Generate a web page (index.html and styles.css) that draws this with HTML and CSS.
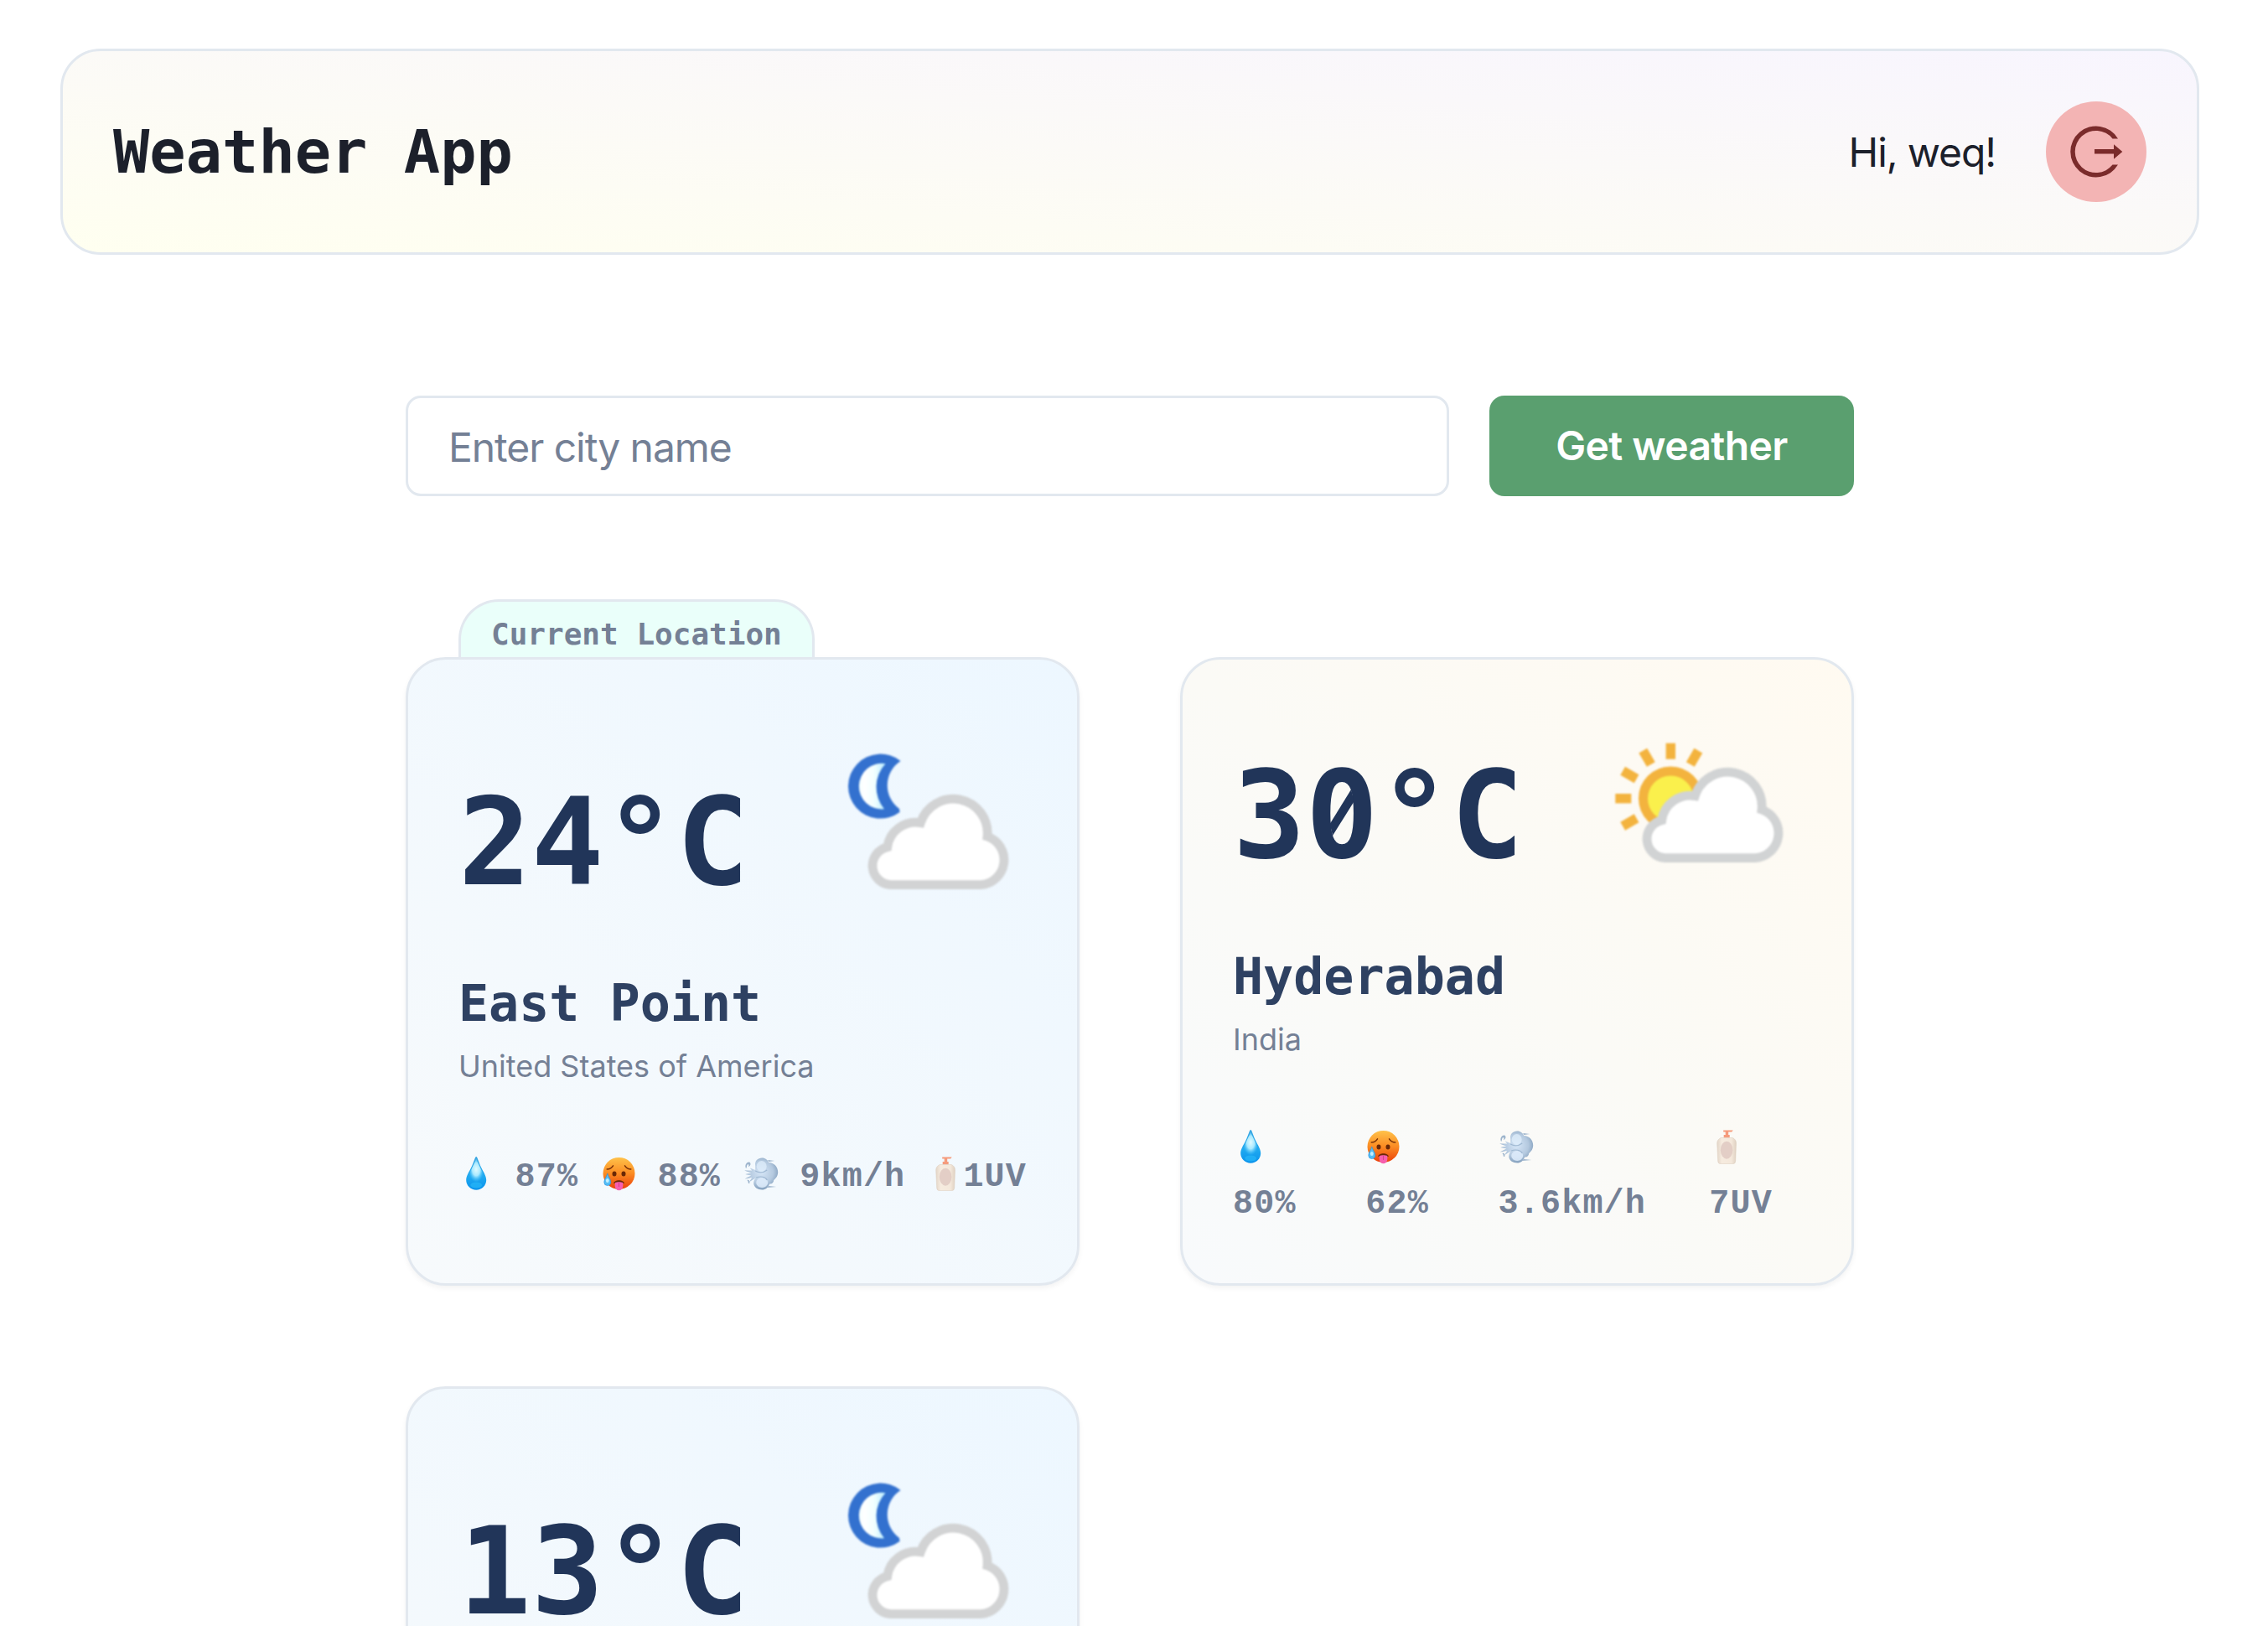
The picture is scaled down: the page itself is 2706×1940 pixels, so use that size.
FILE: index.html
```html
<!DOCTYPE html>
<html lang="en">
<head>
<meta charset="utf-8">
<title>Weather App</title>
<link rel="stylesheet" href="styles.css">
</head>
<body>
<svg class="sprites" width="0" height="0" aria-hidden="true">
  <defs>
    <linearGradient id="moonFill" x1="0" x2="1"><stop offset="0" stop-color="#f4ffff"/><stop offset=".2" stop-color="#ffffff"/><stop offset=".6" stop-color="#f0ffff"/><stop offset="1" stop-color="#b8ecff"/></linearGradient>
    <linearGradient id="dropFill" x1="0" y1="0" x2="0" y2="1"><stop offset="0" stop-color="#3aa5e0"/><stop offset=".6" stop-color="#1fa9f0"/><stop offset="1" stop-color="#0b93ec"/></linearGradient>
    <radialGradient id="dropGlow" cx=".5" cy=".42" r=".5"><stop offset="0" stop-color="#e2fbff"/><stop offset=".5" stop-color="#a9e9ff"/><stop offset="1" stop-color="#3fc0fb" stop-opacity="0"/></radialGradient>
    <linearGradient id="faceFill" x1="0" y1="0" x2="0" y2="1"><stop offset="0" stop-color="#ffc24a"/><stop offset=".5" stop-color="#fb8c23"/><stop offset="1" stop-color="#ea3f0a"/></linearGradient>
    <radialGradient id="windFill" cx=".5" cy=".45" r=".6"><stop offset="0" stop-color="#d6e6f7"/><stop offset=".6" stop-color="#b4c9df"/><stop offset="1" stop-color="#7694b4"/></radialGradient>
    <linearGradient id="bottleFill" x1="0" x2="1"><stop offset="0" stop-color="#e3d6c8"/><stop offset=".25" stop-color="#f6ebdf"/><stop offset=".75" stop-color="#f4e8db"/><stop offset="1" stop-color="#dfd1c2"/></linearGradient>
    <path id="cloud" d="M78 169.7H185A29.7 29.7 0 0 0 193 112A40.9 40.9 0 0 0 113.3 95.7A34 34 0 0 0 73.7 124.7A22.8 22.8 0 0 0 78 169.7Z"/>
  </defs>
  <symbol id="cloudy-night" viewBox="0 0 240 192">
    <path fill="#3371cf" d="M89.5 22A38.500 38.500 0 1 0 88.5 83L88 79A34.600 34.600 0 0 1 89.5 22Z"/>
    <path fill="url(#moonFill)" d="M71.5 25.200A27.300 27.300 0 1 0 70 79.300A41 41 0 0 1 71.5 25.200Z"/>
    <use href="#cloud" fill="#fff" stroke="#d2d3d4" stroke-width="10.800"/>
  </symbol>
  <symbol id="cloudy-day" viewBox="0 0 240 192">
    <circle cx="84.300" cy="98.700" r="32.800" fill="#faf04c" stroke="#f3b33e" stroke-width="11"/>
    <g fill="#f3b33e">
      <rect id="ray" x="78.600" y="32.700" width="11.400" height="19"/>
      <use href="#ray" transform="rotate(30 84.300 98.700)"/>
      <use href="#ray" transform="rotate(-30 84.300 98.700)"/>
      <use href="#ray" transform="rotate(-60 84.300 98.700)"/>
      <use href="#ray" transform="rotate(-90 84.300 98.700)"/>
      <use href="#ray" transform="rotate(-120 84.300 98.700)"/>
    </g>
    <use href="#cloud" fill="#fff" stroke="#d1d3d4" stroke-width="10.800"/>
  </symbol>
  <symbol id="humidity" viewBox="0 0 42 42">
    <path fill="url(#dropFill)" d="M21 1C22.500 1 23.500 7 27 14C30 20 33 24 33 29A12 11.700 0 0 1 9 29C9 24 12 20 15 14C18.500 7 19.500 1 21 1Z"/>
    <path fill="url(#dropGlow)" d="M21 3C22 8 30.500 21 30.500 27A9.500 7 0 0 1 11.500 27C11.500 21 20 8 21 3Z"/>
    <ellipse cx="21" cy="35" rx="7" ry="3.500" fill="#27b6f8" opacity=".7"/>
  </symbol>
  <symbol id="feels-like" viewBox="0 0 42 42">
    <circle cx="21.300" cy="20.900" r="19" fill="url(#faceFill)"/>
    <g fill="none" stroke="#7b3208" stroke-width="1.500" stroke-linecap="round">
      <path d="M7 16C11 15.700 13 14 14.300 11.800M28.300 11.800C29.600 14 31.600 15.700 35.600 16"/>
    </g>
    <ellipse cx="15.800" cy="21.500" rx="2.500" ry="2.900" fill="#6a2806"/>
    <ellipse cx="26.800" cy="21.500" rx="2.500" ry="2.900" fill="#6a2806"/>
    <path fill="#6a2806" d="M15 33C15.500 28 27.100 28 27.600 33Z"/>
    <path fill="#f65fae" d="M16.500 32C19 31 23.600 31 26.100 32V36A4.800 5.200 0 0 1 16.500 36Z"/>
    <path stroke="#d63f8d" stroke-width="1" d="M21.300 32V37"/>
    <path fill="#55bdf5" stroke="#1f8fe0" stroke-width=".6" d="M7.600 21C8.500 25 11.600 28 11.600 31.500A4 4 0 0 1 3.600 31.500C3.600 28 6.700 25 7.600 21Z"/>
    <ellipse cx="7.600" cy="29.500" rx="1.900" ry="2.600" fill="#c4efff"/>
  </symbol>
  <symbol id="wind" viewBox="0 0 42 42">
    <path fill="url(#windFill)" d="M14 12C13 6 17 2.500 22 2.500C26 2.500 29 5 30 8C36 8 41 13 41 19.500C41 24 38.500 27 36 29C36 32 33.500 34 31 33.500C29.500 38 26 40.500 22 40.500C17 40.500 12 37.500 12 32.500C12 29.500 13.500 27.500 14.500 26.500L7 31L10 26L1.500 27.500L9 23.500L2 22L9 20.500L1 17.500L10 17.500L7.500 14.500L14 17Z"/>
    <path fill="#9db4cc" d="M3 15C1 12 3 7 7 7.500C9.500 9 8 13 5.500 13C7 11 6 9.500 4.500 10.500C3.500 12 4 13.500 3 15ZM4 29C6 28 8 30 7 33C4.500 33 6.500 30.500 4 29ZM29 5L37 6L30 7ZM30 36L39 37L28 38Z"/>
    <ellipse cx="21.500" cy="12.500" rx="6" ry="6.500" fill="#dfedfb" opacity=".75"/>
    <ellipse cx="22" cy="32" rx="7" ry="6" fill="#deecfb" opacity=".85"/>
    <path fill="none" stroke="#8fabc8" stroke-width="1.200" opacity=".7" d="M14 18C19 21 24 20 28 17M15 26C20 24 26 25 28 29"/>
  </symbol>
  <symbol id="uv" viewBox="0 0 42 42">
    <path fill="#f59b7c" d="M17 1.500H28.500L27 3.500H23V7H24.500V10.500H17.500V7H19.500V3.500H17Z"/>
    <path fill="url(#bottleFill)" stroke="#dccdbc" stroke-width=".5" d="M14 10.500H28C31 12 32.300 14 32.300 17L31.500 38C31.300 41 30 41.500 28 41.500H14C12 41.500 10.700 41 10.500 38L9.500 17C9.500 14 11 12 14 10.500Z"/>
    <ellipse cx="20.900" cy="25.200" rx="7.300" ry="10.500" fill="#e3cec6"/>
  </symbol>
</svg>

<div class="page">
  <header class="header">
    <h1 class="title">Weather App</h1>
    <div class="user">
      <span class="greeting">Hi, weq!</span>
      <button class="logout" aria-label="Log out">
        <svg viewBox="0 0 120 120" width="120" height="120" fill="#7a2b2b">
          <path d="M86 44.400A30.500 30.500 0 1 0 86 75.600H79.500A25.100 25.100 0 1 1 79.500 44.400Z"/>
          <path d="M58 57.100H81V51.200L91.300 59.900L81 68.700V62.500H58Z"/>
        </svg>
      </button>
    </div>
  </header>

  <main class="content">
    <form class="search">
      <input class="city-input" type="text" placeholder="Enter city name">
      <button class="submit" type="button">Get weather</button>
    </form>

    <section class="cards">
      <article class="card night">
        <span class="tab">Current Location</span>
        <div class="top"><span class="temp">24°C</span><svg class="sky"><use href="#cloudy-night"/></svg></div>
        <h2 class="city">East Point</h2>
        <p class="country">United States of America</p>
        <ul class="stats">
          <li><svg class="emoji"><use href="#humidity"/></svg><span class="value">87%</span></li>
          <li><svg class="emoji"><use href="#feels-like"/></svg><span class="value">88%</span></li>
          <li><svg class="emoji"><use href="#wind"/></svg><span class="value">9km/h</span></li>
          <li class="tight"><svg class="emoji"><use href="#uv"/></svg><span class="value">1UV</span></li>
        </ul>
      </article>

      <article class="card day">
        <div class="top"><span class="temp">3<span class="zero">0</span>°C</span><svg class="sky"><use href="#cloudy-day"/></svg></div>
        <h2 class="city">Hyderabad</h2>
        <p class="country">India</p>
        <ul class="stats stacked">
          <li><svg class="emoji"><use href="#humidity"/></svg><span class="value">80%</span></li>
          <li><svg class="emoji"><use href="#feels-like"/></svg><span class="value">62%</span></li>
          <li><svg class="emoji"><use href="#wind"/></svg><span class="value">3.6km/h</span></li>
          <li><svg class="emoji"><use href="#uv"/></svg><span class="value">7UV</span></li>
        </ul>
      </article>

      <article class="card night">
        <div class="top"><span class="temp">13°C</span><svg class="sky"><use href="#cloudy-night"/></svg></div>
      </article>
    </section>
  </main>
</div>
</body>
</html>
```
FILE: styles.css
```css
* { box-sizing: border-box; margin: 0; padding: 0; }

html, body { height: 1940px; overflow: hidden; }

body {
  background: #fff;
  color: #1c202b;
  font-family: Inter, "Liberation Sans", sans-serif;
}

.sprites { display: block; width: 0; height: 0; }

.page { width: 2696px; padding: 58px 72px 0; }

.header {
  display: flex;
  align-items: center;
  justify-content: space-between;
  height: 246px;
  padding: 60px;
  border: 3px solid #e2e8ef;
  border-radius: 48px;
  background: linear-gradient(to top right, #fffff0, #f8f5fe);
}

.title, .temp, .city, .tab {
  font-family: "DejaVu Sans Mono", "Liberation Mono", monospace;
  font-weight: 700;
}

.title { font-size: 72px; line-height: 90px; }

.user { display: flex; align-items: center; gap: 60px; }

.greeting { padding-top: 2px; font-size: 48px; line-height: 72px; letter-spacing: -1.1px; }

.logout {
  width: 120px;
  height: 120px;
  border: 0;
  border-radius: 50%;
  background: #f3b4b4;
}

.logout svg { display: block; }

.content { width: 1728px; margin: 168px auto 0; }

.search { display: flex; gap: 48px; height: 120px; }

.city-input {
  flex: 1;
  min-width: 0;
  padding: 3px 48px 0;
  border: 3px solid #e2e8ef;
  border-radius: 18px;
  background: #fff;
  color: #1c202b;
  font: 400 48px/72px Inter, "Liberation Sans", sans-serif;
  letter-spacing: -1.05px;
}

.city-input::placeholder { color: #748095; opacity: 1; }

.submit {
  width: 435px;
  border: 0;
  border-radius: 18px;
  background: #5a9f6f;
  color: #fff;
  font: 600 48px/58px Inter, "Liberation Sans", sans-serif;
  letter-spacing: -0.6px;
}

.cards {
  display: grid;
  grid-template-columns: 804px 804px;
  grid-auto-rows: 750px;
  gap: 120px;
  margin-top: 192px;
}

.card {
  position: relative;
  display: flex;
  flex-direction: column;
  justify-content: center;
  padding: 60px;
  border: 3px solid #e2e8ef;
  border-radius: 48px;
  box-shadow: 0 3px 6px rgba(0, 0, 0, .05);
}

.card:last-child { justify-content: flex-start; padding-top: 99px; }

.night { background: linear-gradient(to top right, #f7fafc, #edf7ff); }
.day { background: linear-gradient(to top right, #f8fafc, #fbfaf6 50%, #fffaf1); }

/* Label sitting on the card's top edge */
.tab {
  position: absolute;
  left: 60px;
  bottom: 100%;
  height: 69px;
  margin-bottom: 3px;
  padding: 12px 36px 0;
  border: 3px solid #e2e8ef;
  border-bottom: 0;
  border-radius: 48px 48px 0 0;
  background: #eafffa;
  color: #748095;
  font-size: 36px;
  line-height: 54px;
  white-space: nowrap;
}

.top { display: flex; justify-content: space-between; height: 238px; }

.temp { color: #213559; font-size: 144px; line-height: 238px; }

/* Slashed zero: hides the dot in the counter and draws a diagonal bar */
.zero { position: relative; display: inline-block; }
.zero::before, .zero::after { content: ""; position: absolute; }

.zero::before {
  left: 32px;
  top: 102px;
  width: 23px;
  height: 30px;
  background: #fbfaf6;
}

.zero::after {
  left: 29px;
  top: 88px;
  width: 29px;
  height: 55px;
  background: #213559;
  clip-path: polygon(0 41px, 25.300px 0, 29px 14px, 3.300px 55px);
}

.sky { width: 240px; height: 192px; filter: blur(.8px); }

.city { margin-top: 33px; color: #2e4162; font-size: 60px; line-height: 80px; }

.country {
  margin-top: 8px;
  color: #748095;
  font-size: 36px;
  line-height: 54px;
}

.stats {
  display: flex;
  justify-content: space-between;
  margin-top: 69px;
  list-style: none;
}

.stats li { display: flex; align-items: center; gap: 25.200px; }
.stats .tight { gap: 0; }

.emoji { width: 42.400px; height: 42px; }

.value {
  height: 64px;
  padding-top: 5px;
  color: #748095;
  font: 700 40px/64px "Liberation Mono", monospace;
  letter-spacing: 1.200px;
}

.stacked {
  display: grid;
  grid-template-columns: 158.300px 158.300px 251.700px 1fr;
}

.stacked li { flex-direction: column; align-items: flex-start; gap: 0; }
.stacked .emoji { margin: 11px 0; }
```
